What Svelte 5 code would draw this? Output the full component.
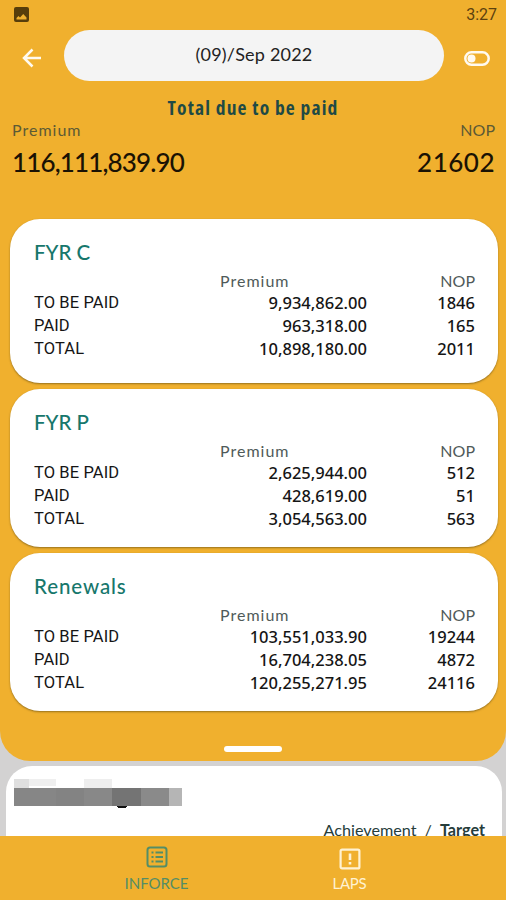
<script>
    const month = '(09)/Sep 2022';
    const totals = { premium: '116,111,839.90', nop: '21602' };

    const groups = [
        {
            title: 'FYR C',
            rows: [
                { label: 'TO BE PAID', premium: '9,934,862.00', nop: '1846' },
                { label: 'PAID', premium: '963,318.00', nop: '165' },
                { label: 'TOTAL', premium: '10,898,180.00', nop: '2011' }
            ]
        },
        {
            title: 'FYR P',
            rows: [
                { label: 'TO BE PAID', premium: '2,625,944.00', nop: '512' },
                { label: 'PAID', premium: '428,619.00', nop: '51' },
                { label: 'TOTAL', premium: '3,054,563.00', nop: '563' }
            ]
        },
        {
            title: 'Renewals',
            rows: [
                { label: 'TO BE PAID', premium: '103,551,033.90', nop: '19244' },
                { label: 'PAID', premium: '16,704,238.05', nop: '4872' },
                { label: 'TOTAL', premium: '120,255,271.95', nop: '24116' }
            ]
        }
    ];

    let activeTab = $state('inforce');
</script>

<div class="screen">
    <main class="content">
        <section class="panel">
            <div class="status">
                <svg width="15" height="15" viewBox="0 0 15 15">
                    <rect width="15" height="15" rx="2" fill="#573d0b" />
                    <path d="M2.5 12.500V11l2-2 1.500 1.500L9.200 7l3.300 3.500v2z" fill="#efb02f" />
                </svg>
                <span>3:27</span>
            </div>

            <header>
                <button class="icon-btn back" aria-label="Back">
                    <svg width="20" height="20" viewBox="0 0 20 20" fill="none" stroke="#fffaf0" stroke-width="2.500">
                        <path d="M19 10H2.500M10.500 1.500L2 10l8.500 8.500" />
                    </svg>
                </button>
                <button class="month">{month}</button>
                <button class="icon-btn toggle" aria-label="Toggle view">
                    <svg width="26" height="15" viewBox="0 0 26 15">
                        <rect x="1.300" y="1.300" width="23.400" height="12.400" rx="6.200" fill="none" stroke="#fffaf0" stroke-width="2.500" />
                        <circle cx="7.500" cy="7.500" r="4" fill="#fffaf0" />
                    </svg>
                </button>
            </header>

            <h1>Total due to be paid</h1>
            <div class="totals">
                <div>
                    <div class="caption">Premium</div>
                    <div class="amount">{totals.premium}</div>
                </div>
                <div class="right">
                    <div class="caption nop-caption">NOP</div>
                    <div class="amount nop-amount">{totals.nop}</div>
                </div>
            </div>

            <div class="cards">
                {#each groups as group, i}
                    <article class="card" class:first={i === 0}>
                        <h2 class:wide={group.title === 'Renewals'}>{group.title}</h2>
                        <div class="row head">
                            <span></span>
                            <span class="head-premium">Premium</span>
                            <span class="num nop-caption">NOP</span>
                        </div>
                        {#each group.rows as row}
                            <div class="row">
                                <span class="label">{row.label}</span>
                                <span class="num">{row.premium}</span>
                                <span class="num">{row.nop}</span>
                            </div>
                        {/each}
                    </article>
                {/each}
            </div>
            <div class="handle"></div>
        </section>

        <section class="sheet">
            <!-- pixelated name -->
            <svg width="170" height="32" viewBox="0 0 170 32" shape-rendering="crispEdges">
                <rect width="15" height="9" fill="#dfdfdf" />
                <rect x="15" width="27" height="7" fill="#efefef" />
                <rect x="70" width="28" height="9" fill="#eeeeee" />
                <ellipse cx="108" cy="26.500" rx="5" ry="2.800" fill="#111" />
                <rect y="9" width="42" height="18" fill="#868686" />
                <rect x="42" y="9" width="28" height="18" fill="#838383" />
                <rect x="70" y="9" width="28" height="18" fill="#888888" />
                <rect x="98" y="9" width="29" height="18" fill="#747474" />
                <rect x="127" y="9" width="28" height="18" fill="#8a8a8a" />
                <rect x="155" y="9" width="13" height="18" fill="#b5b5b5" />
            </svg>
            <div class="target"><span>Achievement</span><span>/</span><b>Target</b></div>
        </section>
    </main>

    <nav>
        <button class="tab" class:active={activeTab === 'inforce'} onclick={() => (activeTab = 'inforce')}>
            <svg width="22" height="22" viewBox="0 0 22 22" fill="none" stroke="currentColor" stroke-width="2">
                <rect x="1.500" y="1.500" width="19" height="19" rx="2.500" />
                <path d="M5.500 6.500h2M9.500 6.500H17M5.500 11h2M9.500 11H17M5.500 15.500h2M9.500 15.500H17" stroke-width="1.800" />
            </svg>
            <span>INFORCE</span>
        </button>
        <button class="tab laps" class:active={activeTab === 'laps'} onclick={() => (activeTab = 'laps')}>
            <svg width="22" height="22" viewBox="0 0 22 22" fill="none" stroke="currentColor" stroke-width="2.200">
                <rect x="1.600" y="1.600" width="18.800" height="18.800" rx="1.500" />
                <path d="M11 5.500v6.500M11 14v2.500" stroke-width="2.600" />
            </svg>
            <span>LAPS</span>
        </button>
    </nav>
</div>

<style>
    :global(body) { margin: 0; }
    .screen { width: 506px; height: 900px; display: flex; flex-direction: column; overflow: hidden; background: #d3d2d2; font-family: Lato, "Noto Sans", sans-serif; color: #151515; }
    .content { height: 836px; overflow: hidden; }
    .panel { height: 761px; background: #f0b02e; border-radius: 0 0 30px 30px; }
    button { border: 0; padding: 0; background: none; font: inherit; }
    svg { display: block; }

    .status { height: 30px; padding: 0 9px 0 14px; display: flex; align-items: center; justify-content: space-between; box-sizing: border-box; font: 16px/30px Roboto, sans-serif; color: #5c410e; }
    .status svg { margin-top: -1px; }
    header { height: 51px; display: flex; align-items: center; }
    .icon-btn { display: flex; justify-content: center; }
    .back { width: 64px; padding-top: 5px; }
    .toggle { width: 62px; padding: 6px 0 0 3px; }
    .month { width: 380px; height: 51px; padding-bottom: 3px; border-radius: 26px; background: #f4f4f4; color: #222; font-size: 18px; letter-spacing: 0.200px; }

    h1 { margin: 13px 0 0; height: 28px; text-align: center; font: 700 19.500px/28px "Open Sans", sans-serif; font-stretch: 84%; letter-spacing: 1.150px; color: #1f4a45; }
    .totals { height: 97px; padding: 0 11px 0 12px; display: flex; justify-content: space-between; }
    .caption { font-size: 16px; line-height: 16px; letter-spacing: 1px; color: #5c5a35; }
    .nop-caption { letter-spacing: 0; }
    .amount { font-size: 26px; line-height: 48px; font-weight: 500; letter-spacing: -0.850px; color: #1a1204; }
    .nop-amount { letter-spacing: 0.500px; }
    .right { text-align: right; }

    .cards { display: flex; flex-direction: column; gap: 6px; padding: 0 8px 0 10px; }
    .card { height: 158px; padding: 20px 23px 0 24px; box-sizing: border-box; border-radius: 30px; background: #fff; box-shadow: 0 1px 2px rgba(90, 70, 20, 0.6); }
    .first { height: 164px; }
    h2 { margin: 0; font-size: 20.500px; line-height: 27px; font-weight: 500; letter-spacing: 0; color: #17776c; }
    .wide { letter-spacing: 0.900px; }
    .row { height: 23.400px; display: grid; grid-template-columns: 150px 183px 108px; font: 500 16.500px/23px "Noto Sans", sans-serif; }
    .head { height: 24.500px; padding-top: 2px; box-sizing: border-box; font: 16px/25px Lato, sans-serif; letter-spacing: 1px; color: #4f5a59; }
    .head-premium { padding-left: 36px; }
    .num { text-align: right; }
    .label { font-family: Roboto, sans-serif; font-weight: 400; font-size: 16.500px; line-height: 24px; letter-spacing: 0.100px; }
    .handle { width: 58px; height: 6px; margin: 35px auto 0; border-radius: 3px; background: #fff; }

    .sheet { height: 90px; margin: 5px 4px 0 6px; padding: 13px 17px 0 8px; border-radius: 26px 26px 0 0; background: #fff; box-sizing: border-box; }
    .target { margin-top: 7px; display: flex; justify-content: flex-end; gap: 8px; font-size: 16.200px; line-height: 24px; color: #263d3b; }

    nav { height: 64px; display: flex; background: #f0b02e; }
    .tab { width: 193px; padding: 10px 0 0; display: flex; flex-direction: column; align-items: center; gap: 6px; color: #fff2d2; font: 15px/18px Lato, sans-serif; }
    .tab:first-child { margin-left: 60px; }
    .laps { padding-top: 12px; gap: 4px; }
    .laps span { letter-spacing: -0.300px; }
    .active { color: #548d66; }
</style>
